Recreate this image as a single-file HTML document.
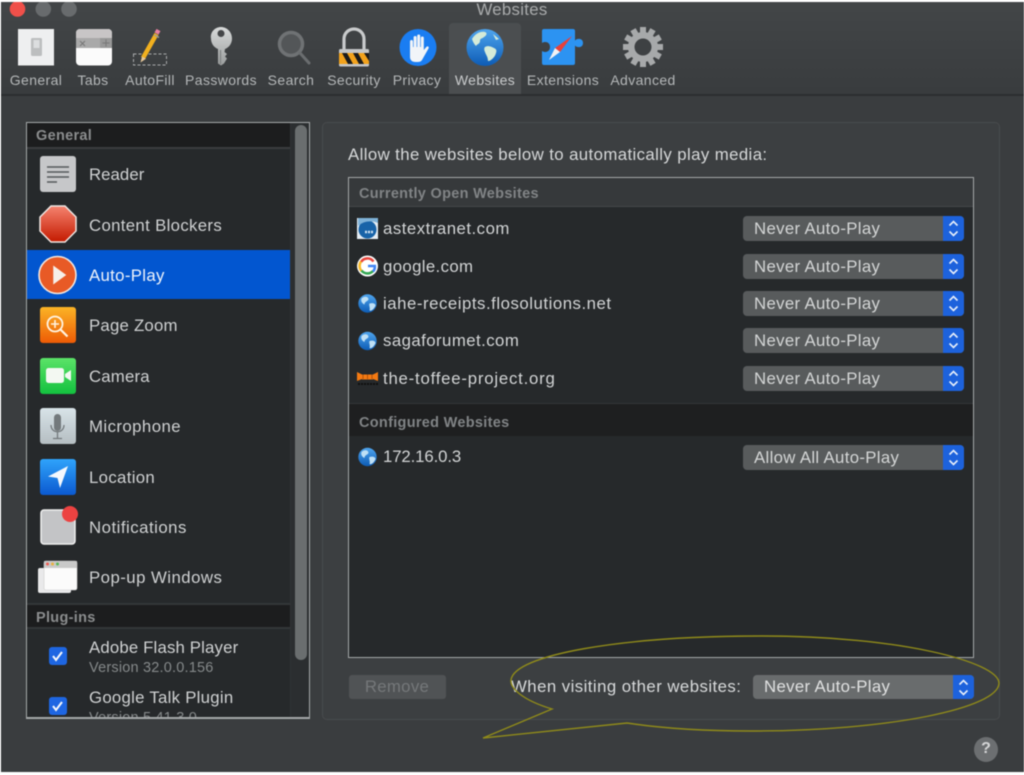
<!DOCTYPE html>
<html><head><meta charset="utf-8"><title>Websites</title>
<style>
*{box-sizing:border-box}
html,body{margin:0;padding:0;background:#fff}
body{width:1024px;height:775px;overflow:hidden;position:relative;font-family:"Liberation Sans",sans-serif}
#w{position:absolute;left:1px;top:2px;width:1023px;height:770px;background:#3a3d3f;overflow:hidden;filter:blur(.6px)}
#in{position:absolute;left:-1px;top:-2px;width:1024px;height:775px}
.a{position:absolute}
.t{position:absolute;white-space:nowrap;line-height:20px;height:20px;margin-top:1px}
.tb{font-size:14px;color:#b4b7b8;top:69px;transform:translateX(-50%);letter-spacing:.38px}
.sb{font-size:16.8px;color:#cfd1d2;left:89px;letter-spacing:.33px}
.h{font-weight:bold;font-size:14.5px;color:#8b8d8e;letter-spacing:.3px}
.site{font-size:16.8px;color:#d2d4d5;left:383px;letter-spacing:.36px}
.sel{position:absolute;width:221px;height:25px;background:#585b5c;border-radius:4px;overflow:hidden;color:#d4d6d6;font-size:16.8px;letter-spacing:.33px;line-height:26px;padding-left:11px;white-space:nowrap}
.sel i{position:absolute;right:0;top:0;width:21px;height:25px;background:#1d62dc}
.sel svg{position:absolute;right:0;top:0}
</style></head>
<body>
<div id="w"><div id="in">
<!-- toolbar -->
<div class="a" style="left:0;top:0;width:1024px;height:94px;background:linear-gradient(#434648,#393c3e)"></div>
<div class="a" style="left:0;top:94px;width:1024px;height:2px;background:#2c2e30"></div>
<div class="a" style="left:449px;top:23px;width:72px;height:71px;background:#4b4e50;border-radius:4px 4px 0 0"></div>
<div class="t" style="left:512px;top:-1px;transform:translateX(-50%);font-size:16.8px;letter-spacing:.3px;color:#a9abac">Websites</div>
<div class="t tb" style="left:36px">General</div>
<div class="t tb" style="left:93px">Tabs</div>
<div class="t tb" style="left:150px">AutoFill</div>
<div class="t tb" style="left:221px">Passwords</div>
<div class="t tb" style="left:291px">Search</div>
<div class="t tb" style="left:354px">Security</div>
<div class="t tb" style="left:417px">Privacy</div>
<div class="t tb" style="left:485px;color:#c9cbcc">Websites</div>
<div class="t tb" style="left:563px">Extensions</div>
<div class="t tb" style="left:643px">Advanced</div>

<svg class="a" style="left:0;top:0" width="1024" height="775" viewBox="0 0 1024 775">
<defs>
<linearGradient id="glob" x1="0" y1="0" x2="0" y2="1"><stop offset="0" stop-color="#4fa5ee"/><stop offset="1" stop-color="#0d5cb5"/></linearGradient>
<linearGradient id="stop" x1="0" y1="0" x2="0" y2="1"><stop offset="0" stop-color="#f5836f"/><stop offset="1" stop-color="#c41a00"/></linearGradient>
<linearGradient id="org" x1="0" y1="0" x2="0" y2="1"><stop offset="0" stop-color="#fbb426"/><stop offset="1" stop-color="#ee5b05"/></linearGradient>
<linearGradient id="grn" x1="0" y1="0" x2="0" y2="1"><stop offset="0" stop-color="#5ce368"/><stop offset="1" stop-color="#14c13f"/></linearGradient>
<linearGradient id="mic" x1="0" y1="0" x2="0" y2="1"><stop offset="0" stop-color="#d8e3e8"/><stop offset="1" stop-color="#b5bec2"/></linearGradient>
<linearGradient id="loc" x1="0" y1="0" x2="0" y2="1"><stop offset="0" stop-color="#2fa4fb"/><stop offset="1" stop-color="#0b59d0"/></linearGradient>
<linearGradient id="key" x1="0" y1="0" x2="0" y2="1"><stop offset="0" stop-color="#d8dada"/><stop offset="1" stop-color="#9a9d9d"/></linearGradient>
<g id="miniglobe"><circle r="9.2" fill="url(#glob)"/><path d="M-6-5 C-3-8 1-7 1-4 C0-2-3-2-3 1 C-5 0-7-2-6-5ZM2 0 C5-1 8 0 8 2 C7 5 4 8 2 7 C3 4 1 2 2 0Z" fill="#bfe0f5"/></g>
<g id="ud"><path d="M6.5 9.5 L10.5 5.5 L14.5 9.5M6.5 15.5 L10.5 19.5 L14.5 15.5" fill="none" stroke="#e8effa" stroke-width="1.6"/></g>
</defs>
<!-- traffic -->
<circle cx="17.5" cy="9" r="7.8" fill="#f0504a"/><circle cx="43.3" cy="9" r="7.8" fill="#686b6d"/><circle cx="69" cy="9" r="7.8" fill="#686b6d"/>
<!-- General -->
<rect x="18" y="29" width="36" height="36.5" fill="#eeeff0"/><rect x="31" y="38" width="11" height="18" rx="1.5" fill="#bcbebf"/><rect x="33.5" y="40" width="6" height="8" fill="#dcdedf"/>
<!-- Tabs -->
<rect x="76" y="29" width="36" height="36.5" rx="4" fill="#fbfbfb"/><path d="M76 39V33a4 4 0 0 1 4-4h28a4 4 0 0 1 4 4v6z" fill="#c8c5c6"/><rect x="76" y="38" width="36" height="10" fill="#a9a9a9"/><rect x="100" y="38" width="12" height="10" fill="#989898"/><path d="M80 41l5 5M85 41l-5 5M102.500 43h7M106 39.500v7" stroke="#777" stroke-width="1" fill="none"/>
<!-- AutoFill -->
<rect x="133.500" y="54" width="33" height="11" fill="none" stroke="#a9abac" stroke-width="1" stroke-dasharray="3 2"/>
<path d="M143 58L156.500 34" stroke="#f1b01f" stroke-width="4.500"/><path d="M140.500 62.500l1.500 -6l4 2.300z" fill="#e6c79a"/><path d="M156.500 33.500l2-3.500" stroke="#e77fa0" stroke-width="4.500"/><path d="M154.500 35l4.500 2.500" stroke="#999" stroke-width="1.500"/>
<!-- Key -->
<path d="M221 27c6 0 11 5 11 11.500 0 5-3 9-7 10.500l-.5 3 2.500 2-2 2.500 2 2-3 5-3 2-3-2V49c-4-1.500-7-5.500-7-10.500C210 32 215 27 221 27z" fill="url(#key)"/><circle cx="221" cy="33.500" r="3.500" fill="#444648"/><path d="M220.500 50v14" stroke="#7d8080" stroke-width="1.200"/>
<!-- Search -->
<circle cx="291" cy="44" r="11.500" fill="#535658" stroke="#6f7274" stroke-width="3.500"/><path d="M300 53l9 10" stroke="#6a6d6f" stroke-width="3" stroke-linecap="round"/>
<!-- Security -->
<path d="M344 51V39a10 10 0 0 1 20 0v12" fill="none" stroke="#c9cbcc" stroke-width="3.200"/>
<rect x="339" y="49" width="30" height="17.500" rx="1.500" fill="#c4c6c7"/><rect x="339" y="53" width="30" height="11" fill="#f2a21c"/><path d="M342 53h5l6 11h-5zM353 53h5l6 11h-5zM364 53h5v8z" fill="#1b1b1b"/>
<!-- Privacy -->
<circle cx="418" cy="47.500" r="18.500" fill="#1a7df2"/><path d="M410 57V41.500a1.500 1.500 0 0 1 3 0V47h.6V37.500a1.500 1.500 0 0 1 3 0V47h.6V36a1.500 1.500 0 0 1 3 0V47h.6V38a1.500 1.500 0 0 1 3 0V50l2.500-3c1.500-1.500 3 0 2.200 1.500L422 60c-1 1.500-2.500 2-4.500 2h-2c-3.500 0-5.500-2-5.500-5z" fill="#f1f4f8"/>
<!-- Websites -->
<circle cx="485" cy="47.500" r="18.500" fill="url(#glob)"/><path d="M472 39c3-5 8-8 13-7 3 1 1 4-1 5-2 2-4 1-4 4 0 3-3 3-4 5-2-2-3-4-4-7zM485 47c3-2 7 0 9 1 2 1 3 2 2 5-1 4-5 8-8 8 0-4-2-6-3-9-1-2-1-4 0-5zM493 34l6 5-3 1z" fill="#d5ebd8"/>
<!-- Extensions -->
<path d="M544 29h29a2 2 0 0 1 2 2v9.500c2-2.500 8-2.500 8 2.500s-6 5-8 2.500V63a2 2 0 0 1-2 2h-29a2 2 0 0 1-2-2V51c3 2 8 1 8-4s-5-6-8-4V31a2 2 0 0 1 2-2z" fill="#2c93f2"/><path d="M572 36L560 52l-5-4z" fill="#e8413a"/><path d="M549 60l6-12 5 4z" fill="#f1f2f4"/>
<!-- Advanced -->
<g transform="translate(643 47)"><g fill="#a7a9aa"><rect x="-3" y="-20" width="6" height="40"/><rect x="-3" y="-20" width="6" height="40" transform="rotate(30)"/><rect x="-3" y="-20" width="6" height="40" transform="rotate(60)"/><rect x="-3" y="-20" width="6" height="40" transform="rotate(90)"/><rect x="-3" y="-20" width="6" height="40" transform="rotate(120)"/><rect x="-3" y="-20" width="6" height="40" transform="rotate(150)"/></g><circle r="11" fill="none" stroke="#a7a9aa" stroke-width="8"/><circle r="8.500" fill="#3e4143"/></g>
</svg>

<!-- sidebar -->
<div class="a" style="left:26px;top:122px;width:284px;height:597px;border:1.500px solid #a5a8a9;background:#26292b;overflow:hidden">
 <div class="a" style="left:0;top:0;width:263px;height:26px;background:#1c1d1e;border-bottom:2px solid #3a3d3f"></div>
 <div class="a" style="left:263px;top:0;width:19px;height:600px;background:#2b2e30;border-left:1px solid #303335"></div>
 <div class="a" style="left:268px;top:2px;width:12px;height:535px;border-radius:6px;background:#6a6e6f"></div>
 <div class="a" style="left:0;top:127px;width:263px;height:49px;background:#0256d0"></div>
 <div class="a" style="left:0;top:480px;width:263px;height:2px;background:#333638"></div>
 <div class="a" style="left:0;top:482px;width:263px;height:24px;background:#1c1d1e;border-bottom:2px solid #333638"></div>
 <div class="t" style="left:62px;top:584px;font-size:14.500px;letter-spacing:.2px;color:#85898a">Version 5.41.3.0</div>
</div>
<div class="t h" style="left:36px;top:125px">General</div>
<div class="t sb" style="top:164px;letter-spacing:.05px">Reader</div>
<div class="t sb" style="top:215px">Content Blockers</div>
<div class="t sb" style="top:265px;color:#eef3fb">Auto-Play</div>
<div class="t sb" style="top:315px;letter-spacing:.22px">Page Zoom</div>
<div class="t sb" style="top:366px;letter-spacing:.17px">Camera</div>
<div class="t sb" style="top:416px;letter-spacing:.43px">Microphone</div>
<div class="t sb" style="top:467px">Location</div>
<div class="t sb" style="top:517px;letter-spacing:.5px">Notifications</div>
<div class="t sb" style="top:567px;letter-spacing:.46px">Pop-up Windows</div>
<div class="t h" style="left:36px;top:607px">Plug-ins</div>
<div class="t sb" style="top:637px;letter-spacing:.16px">Adobe Flash Player</div>
<div class="t" style="left:89px;top:657px;font-size:14.500px;letter-spacing:.2px;color:#85898a">Version 32.0.0.156</div>
<div class="t sb" style="top:687px;letter-spacing:.27px">Google Talk Plugin</div>

<svg class="a" style="left:0;top:0" width="1024" height="775" viewBox="0 0 1024 775">
<!-- Reader -->
<rect x="40" y="156" width="36" height="36" rx="3" fill="#c6c7c9"/><path d="M47 167h22M47 172h22M47 177h22M47 182h10" stroke="#55585a" stroke-width="1.600"/>
<!-- Blockers -->
<path d="M51 206h14l11 11v14l-11 11H51L40 231V217z" fill="url(#stop)" stroke="#efe7e4" stroke-width="1.500"/>
<!-- Auto-Play -->
<circle cx="57.500" cy="275" r="18.500" fill="#e85a26" stroke="#f2e6df" stroke-width="1.600"/><path d="M54 267l11 8-11 8z" fill="#f6efe9" stroke="#f6efe9" stroke-width="1.500"/>
<!-- Page Zoom -->
<rect x="40" y="307" width="36" height="36" rx="3" fill="url(#org)"/><circle cx="55" cy="324" r="7.500" fill="none" stroke="#fff3e0" stroke-width="1.800"/><path d="M51 324h8M55 320v8" stroke="#fff3e0" stroke-width="1.600"/><path d="M60.500 329.500l7 7" stroke="#fff3e0" stroke-width="2.200"/>
<!-- Camera -->
<rect x="40" y="358" width="36" height="36" rx="3" fill="url(#grn)"/><rect x="46" y="368" width="18" height="15" rx="2.500" fill="#f3f8f2"/><path d="M65 374l6-4v11l-6-4z" fill="#f3f8f2"/>
<!-- Mic -->
<rect x="40" y="408" width="36" height="36" rx="3" fill="url(#mic)"/><rect x="54" y="414" width="7" height="17" rx="3.500" fill="#73797c"/><path d="M51 425c0 9 13 9 13 0M57.500 432v6M53 438.500h9" fill="none" stroke="#73797c" stroke-width="1.300"/>
<!-- Location -->
<rect x="40" y="459" width="36" height="36" rx="3" fill="url(#loc)"/><path d="M68 466L48 476.500l9.500 1.500 2.500 10z" fill="#f4f8fd"/>
<!-- Notifications -->
<rect x="41" y="510" width="34" height="34" rx="3" fill="#c3c4c6" stroke="#efefef" stroke-width="1.500"/><circle cx="70" cy="514" r="8" fill="#ec4241"/>
<!-- Popups -->
<rect x="38" y="568" width="33" height="25" rx="2" fill="#e9e9ea"/><rect x="44" y="561" width="33" height="29" rx="2" fill="#fbfbfb" stroke="#cfcfcf" stroke-width=".6"/><rect x="44" y="561" width="33" height="7" fill="#c9c9c9"/><circle cx="47.500" cy="564" r="1.500" fill="#ed5f55"/><circle cx="52.500" cy="564" r="1.500" fill="#e9b23f"/><circle cx="57.500" cy="564" r="1.500" fill="#5bb85a"/>
<!-- Checks -->
<rect x="49" y="647" width="18" height="18" rx="3" fill="#1e66e2"/><path d="M53 656l3 4 6-8" fill="none" stroke="#f4f7fc" stroke-width="2"/>
<rect x="49" y="697" width="18" height="18" rx="3" fill="#1e66e2"/><path d="M53 706l3 4 6-8" fill="none" stroke="#f4f7fc" stroke-width="2"/>
</svg>
<!-- sidebar bottom border redraw -->
<div class="a" style="left:26px;top:717px;width:284px;height:2px;background:#a5a8a9"></div>
<div class="a" style="left:26px;top:719px;width:284px;height:30px;background:#3a3d3f"></div>

<!-- right panel -->
<div class="a" style="left:322px;top:122px;width:678px;height:598px;border:1px solid #484b4d;border-radius:5px;background:#3c3f41"></div>
<div class="t" style="left:348px;top:144px;font-size:16.800px;letter-spacing:.4px;color:#d6d8d9">Allow the websites below to automatically play media:</div>
<div class="a" style="left:348px;top:177px;width:626px;height:481px;border:1.500px solid #a5a8a9;background:#26292b;overflow:hidden">
 <div class="a" style="left:0;top:0;width:626px;height:29px;background:#36393b;border-bottom:1px solid #45484a"></div>
 <div class="a" style="left:0;top:225px;width:626px;height:33px;background:#1e1f20;border-top:1px solid #333638"></div>
</div>
<div class="t h" style="left:359px;top:183px;color:#818486">Currently Open Websites</div>
<div class="t h" style="left:359px;top:412px;color:#818486">Configured Websites</div>
<div class="t site" style="top:218px;letter-spacing:.5px">astextranet.com</div>
<div class="t site" style="top:256px">google.com</div>
<div class="t site" style="top:293px;letter-spacing:.53px">iahe-receipts.flosolutions.net</div>
<div class="t site" style="top:330px;letter-spacing:.44px">sagaforumet.com</div>
<div class="t site" style="top:368px;letter-spacing:.78px">the-toffee-project.org</div>
<div class="t site" style="top:446px;letter-spacing:-.12px">172.16.0.3</div>

<div class="sel" style="left:743px;top:216px">Never Auto-Play<i></i><svg width="21" height="25"><use href="#ud"/></svg></div>
<div class="sel" style="left:743px;top:254px">Never Auto-Play<i></i><svg width="21" height="25"><use href="#ud"/></svg></div>
<div class="sel" style="left:743px;top:291px">Never Auto-Play<i></i><svg width="21" height="25"><use href="#ud"/></svg></div>
<div class="sel" style="left:743px;top:328px">Never Auto-Play<i></i><svg width="21" height="25"><use href="#ud"/></svg></div>
<div class="sel" style="left:743px;top:366px">Never Auto-Play<i></i><svg width="21" height="25"><use href="#ud"/></svg></div>
<div class="sel" style="left:743px;top:445px">Allow All Auto-Play<i></i><svg width="21" height="25"><use href="#ud"/></svg></div>

<div class="a" style="left:349px;top:675px;width:97px;height:24px;background:#505355;border-radius:3px"></div>
<div class="t" style="left:397px;top:676px;transform:translateX(-50%);font-size:16.800px;letter-spacing:.3px;color:#75787a">Remove</div>
<div class="t" style="left:511px;top:676px;font-size:16.800px;letter-spacing:.45px;color:#d8dadb">When visiting other websites:</div>
<div class="sel" style="left:753px;top:675px;background:#696c6d;color:#e0e1e1;height:24px;line-height:24px">Never Auto-Play<i style="height:24px"></i><svg width="21" height="25"><use href="#ud"/></svg></div>
<div class="a" style="left:974px;top:737px;width:24px;height:25px;border-radius:50%;background:#6c6f71"></div>
<div class="t" style="left:986px;top:738px;transform:translateX(-50%);font-size:16px;font-weight:bold;color:#d5d6d7">?</div>

<svg class="a" style="left:0;top:0" width="1024" height="775" viewBox="0 0 1024 775">
<!-- favicons -->
<rect x="357" y="218" width="21" height="21" fill="#e6edf3"/><circle cx="367.500" cy="229.500" r="9" fill="#1863a8"/><path d="M358 226c5-5 14-6 20-3v-5h-20z" fill="#7fb2d8"/><path d="M365 232h9" stroke="#cfe2f2" stroke-width="2.500" stroke-dasharray="2 1"/>
<circle cx="367.500" cy="266" r="10.500" fill="#fff"/><path d="M373.500 261.500A7.500 7.500 0 0 0 361 262" fill="none" stroke="#e8453c" stroke-width="2.600"/><path d="M361 261.500A7.500 7.500 0 0 0 361.500 271" fill="none" stroke="#f9bb2d" stroke-width="2.600"/><path d="M361.500 270.500A7.500 7.500 0 0 0 373 271" fill="none" stroke="#34a853" stroke-width="2.600"/><path d="M373 271.500c1.500-1.500 2-3.500 1.800-5.500H368" fill="none" stroke="#4285f4" stroke-width="2.600"/>
<use href="#miniglobe" x="367.500" y="303.500"/>
<use href="#miniglobe" x="367.500" y="341"/>
<path d="M357 372l5 2.500h11l5-2.500v9l-5-2h-11l-5 2z" fill="#f47a12"/><path d="M362 374.500h11v5h-11z" fill="#f47a12"/><path d="M363 379v-4.500M367.500 379v-4.500M372 379v-4.500" stroke="#b25308" stroke-width="1"/><path d="M358 384h20" stroke="#0c0c0c" stroke-width="1.800" stroke-dasharray="2 1"/>
<use href="#miniglobe" x="367.500" y="457"/>
<!-- callout -->
<path d="M552 709C522 700 510 688 511 680C514 655 620 636 762 636C900 636 998 662 999 683C999 708 890 731 750 731C700 731 660 728 627 723L483 738Z" fill="none" stroke="#8f8a1a" stroke-width="1.400" stroke-linejoin="miter"/>
</svg>
</div></div>
</body></html>
